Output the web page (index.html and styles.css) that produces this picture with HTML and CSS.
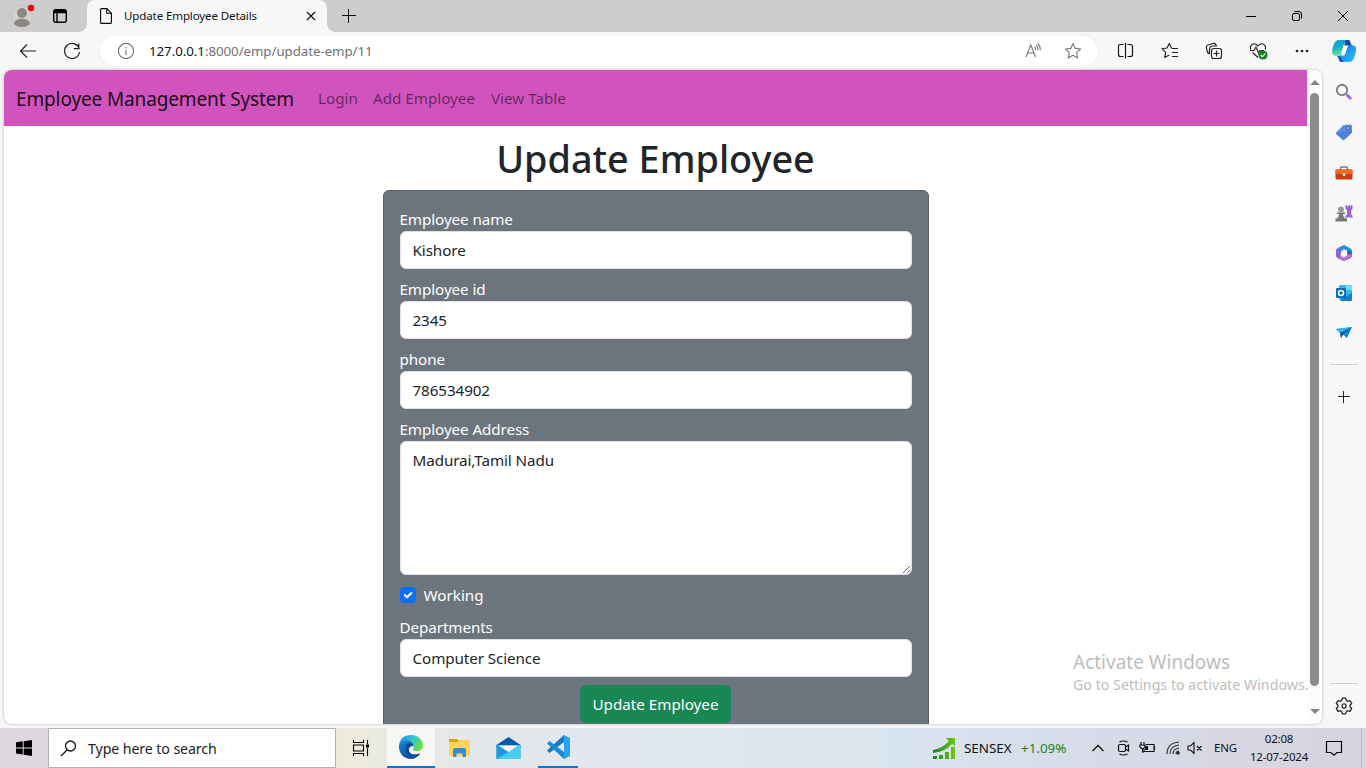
FILE: index.html
```html
<!DOCTYPE html>
<html lang="en">
<head>
<meta charset="utf-8">
<title>Update Employee Details</title>
<link rel="stylesheet" href="styles.css">
</head>
<body>
<header class="tabstrip">
  <svg class="profile" width="24" height="24" viewBox="0 0 24 24"><circle cx="11" cy="12" r="10.5" fill="#d3d1ce" stroke="#c5c2bd"/><circle cx="11" cy="9" r="5" fill="#8b8782"/><path d="M3 20c0-7 16-7 16 0-4 4-12 4-16 0z" fill="#8b8782"/><circle cx="20" cy="4" r="3.2" fill="#e60012"/></svg>
  <svg class="tabmenu" width="16" height="16" viewBox="0 0 16 16" fill="none" stroke="#000" stroke-width="1.4"><rect x="1.7" y="1.7" width="12.6" height="12.6" rx="2.3"/><path d="M2 3.500h12" stroke-width="3.500"/><path d="M5 5v9"/></svg>
  <div class="tab">
    <svg width="14" height="18" viewBox="0 0 14 18" fill="none" stroke="#000" stroke-width="1.1"><path d="M1.6 2.6q0-1 1-1h5.2l4.6 4.6v9.2q0 1-1 1H2.600q-1 0-1-1zM7.800 1.800v4.400h4.400"/></svg>
    <span class="tab-title">Update Employee Details</span>
    <svg width="10" height="10" viewBox="0 0 10 10" stroke="#111" stroke-width="1.2"><path d="M1 1l8 8M9 1L1 9"/></svg>
  </div>
  <svg class="newtab" width="14" height="14" viewBox="0 0 14 14" stroke="#111"><path d="M0 6.500h14M6.500 0v14"/></svg>
  <div class="winctl">
    <svg width="12" height="12" viewBox="0 0 12 12" stroke="#000"><path d="M1 6.500h10"/></svg>
    <svg width="12" height="12" viewBox="0 0 12 12" fill="none" stroke="#000"><rect x="1.500" y="3.500" width="7" height="7" rx="1.500"/><path d="M3.500 1.500h4.500q2.500 0 2.500 2.500v4.500"/></svg>
    <svg width="12" height="12" viewBox="0 0 12 12" stroke="#000"><path d="M1 1l10 10M11 1L1 11"/></svg>
  </div>
</header>

<div class="toolbar">
  <svg class="back" width="18" height="16" viewBox="0 0 18 16" fill="none" stroke="#222" stroke-width="1.150"><path d="M8 1.500L1.500 8 8 14.500M1.500 8H17"/></svg>
  <svg class="reload" width="18" height="18" viewBox="0 0 18 18" fill="none" stroke="#222" stroke-width="1.200"><path d="M16.300 7A7.500 7.500 0 1 0 16.500 10M15.800 1.500v5.200h-5"/></svg>
  <div class="address">
    <svg width="18" height="18" viewBox="0 0 18 18" fill="none" stroke="#707070" stroke-width="1.100"><circle cx="9" cy="9" r="7.600"/><path d="M9 8v5"/><path d="M9 5v1.400"/></svg>
    <span class="url"><b>127.0.0.1</b>:8000/emp/update-emp/11</span>
    <svg class="read" width="16" height="16" viewBox="0 0 16 16" fill="none" stroke="#777" stroke-width="1.100"><path d="M1 14L5.800 2 10.600 14M2.700 10h6.200M9.500 4q1.300 1 1 3M11 2q2.300 1.800 1.800 5M12.500.5q3.300 2.300 2.600 7"/></svg>
    <svg width="18" height="18" viewBox="0 0 18 18" fill="none" stroke="#777" stroke-width="1.100" stroke-linejoin="round"><path d="M9 1.500l2.200 4.900 5.400.600-4 3.600 1.100 5.300L9 13.200l-4.700 2.700 1.100-5.300-4-3.600 5.400-.600z"/></svg>
  </div>
  <div class="tools">
    <svg width="18" height="18" viewBox="0 0 18 18" fill="none" stroke="#111" stroke-width="1.150"><path d="M6.500 2.500H3.500Q1.500 2.500 1.500 4.500v8q0 2 2 2h3M10.500 2.500h3q2 0 2 2v8q0 2-2 2h-3M8.500 1v15.500"/></svg>
    <svg width="18" height="18" viewBox="0 0 18 18" fill="none" stroke="#222" stroke-width="1.150" stroke-linejoin="round"><path d="M10.500 6L8.300 1.500 6 6l-5 .700 3.600 3.600-.900 5.200 4.600-2.500M10.500 6.500h6.500M11 10.500h6M11 14.500h6"/></svg>
    <svg width="18" height="18" viewBox="0 0 18 18" fill="none" stroke="#222" stroke-width="1.150"><rect x="6.500" y="6.500" width="10" height="10" rx="2.300"/><path d="M11.500 8.500v6M8.500 11.500h6M4.500 12Q2.800 11.500 2.300 9.500L1.300 5.500Q1 3.600 2.800 3L8 1.500q2-.500 2.800 1L11.500 4M4.500 12V7q0-3 3-3h4.500"/></svg>
    <svg width="20" height="18" viewBox="0 0 20 18" fill="none" stroke="#222" stroke-width="1.150"><path d="M1.800 7.500Q.5 4 3.500 2.200 6.700.8 9 4q2.500-3.200 5.500-1.800 3 1.800 1.700 5.300M1 8.500h4l2-3.500 2.500 6 1.500-2.500h4M3.500 10.500L9 15.500"/><circle cx="14" cy="13" r="4.600" fill="#128412" stroke="none"/><path d="M11.800 13l1.600 1.600 2.800-3" stroke="#fff"/></svg>
    <svg width="14" height="4" viewBox="0 0 14 4" fill="#222"><circle cx="2" cy="2" r="1.350"/><circle cx="7" cy="2" r="1.350"/><circle cx="12" cy="2" r="1.350"/></svg>
  </div>
  <svg class="copilot" width="24" height="24" viewBox="0 0 24 24"><defs><linearGradient id="cpa" x2=".2" y2="1"><stop stop-color="#139fe0"/><stop offset=".5" stop-color="#12afc5"/><stop offset="1" stop-color="#6ce68f"/></linearGradient><linearGradient id="cpb" x2=".8" y2="1"><stop stop-color="#174fad"/><stop offset=".5" stop-color="#218cf0"/><stop offset="1" stop-color="#25bcff"/></linearGradient></defs><path d="M12 1h4c3 0 2 5 5 5.500 4 .5 3.500 4 2 9.500-1.500 5-3 7-6 7H10c-3 0-2-5-4-6l8-4z" fill="url(#cpb)"/><path d="M7 17c2 0 3 6 5 6H9c-2 0-2-4-4-6z" fill="#184bd0"/><path d="M7 1h7c-2 2-3 8-5 14-.7 2-2 2-4 2-5 0-6-3-4-9C2.500 3 4 1 7 1z" fill="url(#cpa)"/><path d="M14 1h2.500C18 1 18 4 19 6.500h-6.500C13 4 13 2 14 1z" fill="#134b8c"/><path d="M13 6.500h3.500c-1.500 1-2.500 8.500-4.500 10H8.500c2.500-1 2.500-9 4.500-10z" fill="#fff"/></svg>
</div>

<div class="middle">
  <div class="frame">
    <main class="page">
      <nav class="navbar">
        <a class="brand">Employee Management System</a>
        <a class="n1">Login</a><a class="n2">Add Employee</a><a class="n3">View Table</a>
      </nav>
      <h1>Update Employee</h1>
      <form class="card">
        <label>Employee name</label>
        <div class="control">Kishore</div>
        <label>Employee id</label>
        <div class="control">2345</div>
        <label>phone</label>
        <div class="control">786534902</div>
        <label>Employee Address</label>
        <div class="control area"><span>Madurai,Tamil Nadu</span><svg width="9" height="9" viewBox="0 0 9 9" stroke="#555" stroke-width=".900"><path d="M1 8l7-7M5 8l3-3"/></svg></div>
        <div class="check"><svg width="16" height="16" viewBox="0 0 16 16"><rect width="16" height="16" rx="4" fill="#0d6efd"/><path d="M4.800 8l2.300 2.300L11.400 6" fill="none" stroke="#fff" stroke-width="2" stroke-linecap="round" stroke-linejoin="round"/></svg><span>Working</span></div>
        <label>Departments</label>
        <div class="control">Computer Science</div>
        <button type="button" class="submit">Update Employee</button>
      </form>
    </main>
    <div class="scrollbar"><i class="up"></i><i class="thumb"></i><i class="down"></i></div>
  </div>
  <aside class="sidebar">
    <svg width="18" height="18" viewBox="0 0 18 18" fill="none"><path d="M11.500 11.500l4.500 4.500" stroke="#a06bd6" stroke-width="2.800"/><circle cx="7" cy="7" r="5.200" stroke="#7d7d7d" stroke-width="1.900"/></svg>
    <svg width="18" height="18" viewBox="0 0 18 18"><path d="M1 9.500L8.500 2l7-.500q1.500 0 1.500 1.500v6.500L9 17q-1 .5-2-.5L1 11z" fill="#5b90e4"/><path d="M1 10l8 7 8-7.500V7z" fill="#426fd0" opacity=".5"/><circle cx="13" cy="5" r="1.500" fill="#fff" stroke="#22407c"/></svg>
    <svg width="18" height="16" viewBox="0 0 18 16"><path d="M5.500 5V3q0-1 1-1h5q1 0 1 1v2" fill="none" stroke="#777" stroke-width="1.400"/><rect x=".5" y="4.500" width="17" height="10" rx="1" fill="#c93f0c"/><path d="M.5 5.500q0-1 1-1h15q1 0 1 1V9H.5z" fill="#ee6a24"/><circle cx="9" cy="9.500" r="1.600" fill="#cfe3ec"/></svg>
    <svg width="18" height="18" viewBox="0 0 18 18"><path d="M10.500 1h1.500v1.500h1.500V1h1.500v1.500h1V1H17.500v4l-1.300 1v4l1.800 3.500H9.500L12 10V6l-1.500-1z" fill="#9668cf"/><circle cx="6" cy="5.500" r="3" fill="#9b9b9b"/><path d="M2 8.500h8v1.500H8q0 3 2.500 4.500h1.500v3H.5v-3H2q2-1.500 2-4.500H2z" fill="#777"/></svg>
    <svg width="18" height="18" viewBox="0 0 18 18"><path d="M2.500 4.300L5 2.800q1-.5 1.500.7L7 6.500 5.800 9v4L8 14.500l-1 2L2.500 14Q1 13 1 11.500v-5Q1 5 2.500 4.300z" fill="#8c63d4"/><path d="M5 3l3-1.600q1-.6 2 0L15.500 4.500Q17 5.300 17 7v2l-5-2.500-3-1.200L6.500 7 3 8z" fill="#2a8fe0"/><path d="M12 6.500l5 1.500v3.500q0 1.500-1.500 2.500L12 16l-2-2 2.500-2z" fill="#3c4fc4"/><path d="M6 12l3 1.500 3-1.800 4.500-2.700q.7 4-1 5L10 16.700q-1 .6-2 0L3 14z" fill="#b673d8"/><path d="M9 6l2.600 1.500v3L9 12l-2.600-1.500v-3z" fill="#f7f7f7"/></svg>
    <svg width="18" height="18" viewBox="0 0 18 18"><rect x="4" y="1" width="13" height="15" rx="1" fill="#31b8ef"/><path d="M11 1h6v5h-6z" fill="#71d9fa"/><path d="M5 16l12-7v7q0 1-1 1H6z" fill="#137bca"/><rect x="1" y="4" width="10" height="10" rx="1.200" fill="#0968bc"/><circle cx="6" cy="9" r="2.500" fill="none" stroke="#fff" stroke-width="1.500"/></svg>
    <svg width="18" height="18" viewBox="0 0 18 18"><path d="M1 5l16-2-5 11-4-3.500L6 14 5 9z" fill="#1488d4"/><path d="M1 5l16-2L5 9z" fill="#3bb2ed"/><path d="M5 9l12-6-9 7.500L6 14z" fill="#075a9b"/></svg>
    <hr>
    <svg class="plus" width="14" height="14" viewBox="0 0 14 14" stroke="#222"><path d="M1 6.500h12M6.500 1v12"/></svg>
    <span class="spacer"></span>
    <hr>
    <svg class="gear" width="18" height="18" viewBox="0 0 18 18" fill="none" stroke="#222" stroke-width="1.250" stroke-linejoin="round"><path d="M7.300 1.200h3.400l.6 2.300 1.400.8 2.300-.700 1.700 2.900L15 8.200v1.600l1.700 1.700-1.700 2.900-2.300-.7-1.400.8-.6 2.300H7.300l-.6-2.300-1.400-.8-2.300.7-1.700-2.900L3 9.800V8.200L1.300 6.500 3 3.600l2.300.7 1.400-.8z"/><circle cx="9" cy="9" r="2.100"/></svg>
  </aside>
  <div class="activate"><div class="act1">Activate Windows</div><div class="act2">Go to Settings to activate Windows.</div></div>
</div>

<footer class="taskbar">
  <div class="start"><svg width="16" height="16" viewBox="0 0 16 16"><path d="M0 2.300l6.800-1v6.200H0zM7.700 1.200L16 0v7.500H7.700zM0 8.400h6.800v6.200l-6.800-1zM7.700 8.400H16V16l-8.300-1.200z"/></svg></div>
  <div class="search"><svg width="17" height="17" viewBox="0 0 17 17" fill="none" stroke="#111" stroke-width="1.300"><circle cx="10.500" cy="6" r="5"/><path d="M7 10L1 16"/></svg><span>Type here to search</span></div>
  <div class="app view"><svg width="18" height="16" viewBox="0 0 18 16" fill="none" stroke="#000" stroke-width="1.100"><path d="M1.500 0v2.500h10V0M1.500 16v-2.500h10V16M1.500 5h10v6h-10zM15.500 0v4M15.500 8v8"/><path d="M14 4.500h3v3h-3z" fill="#000" stroke="none"/></svg></div>
  <div class="app edge"><svg width="26" height="26" viewBox="0 0 26 26"><defs><linearGradient id="eg" x2="1" y2=".3"><stop stop-color="#1389db"/><stop offset=".55" stop-color="#31bfd6"/><stop offset="1" stop-color="#68e04a"/></linearGradient><linearGradient id="eb" x2=".4" y2="1"><stop stop-color="#1687d2"/><stop offset="1" stop-color="#0b4da1"/></linearGradient></defs><path d="M1 13C1 5 6 1 13 1c7 0 12 5 12 10 0 4-3 6.500-6.500 6.500-3 0-4.500-1-3.500-2.500 2-3-.5-6-4-6-4 0-8 1-10 4z" fill="url(#eg)"/><path d="M1 13c0-4 4-6.500 8-6.500 4 0 7 3 6.500 6-2.500-1-4.500.5-4.500 3.500 0 4 5 6 11 3.500-2 3.500-5.500 5.500-9 5.500C6 25 1 19.500 1 13z" fill="url(#eb)"/><path d="M9 10c-4 5 0 13 7 13 3 0 5-1.500 6-3.500-6 2.500-11 .5-11-3.500 0-3 2-4.500 4-3.500-.5-3-4-4-6-2.500z" fill="#104b91"/><path d="M11 16c0-3 2-4.500 4.500-3.500.3 1-.8 2.200-.5 3 .3 1.500 2.500 2 5 1.900-1.500 2.100-9 2.600-9-1.400z" fill="#f7f7f5"/></svg></div>
  <div class="app"><svg width="22" height="20" viewBox="0 0 22 20"><path d="M0 1h8l2 2v3H0z" fill="#e0a100"/><path d="M0 4h9l1.500-2H20q1 0 1 1v14q0 1-1 1H0z" fill="#ffd45a"/><path d="M4 19v-7q0-2 2-2h9q2 0 2 2v7h-3.500v-3.500h-6V19z" fill="#378bd3"/></svg></div>
  <div class="app"><svg width="25" height="24" viewBox="0 0 25 24"><path d="M.5 9L12.500 1l12 8v3H.5z" fill="#0859a7"/><path d="M.5 9h24v14H.5z" fill="#29a9e8"/><path d="M.5 23l24-14v14z" fill="#4ccbf5"/><path d="M.5 9L12.500 16 .5 23z" fill="#2199e0"/><path d="M2.500 9.500h20l-10 6.500z" fill="#fff"/></svg></div>
  <div class="app code"><svg width="24" height="24" viewBox="0 0 24 24"><path d="M18 7L3.500 18 1 15.500 18 0z" fill="#1479c0"/><path d="M1 8.500L3.500 6 18 17v7z" fill="#1a8ad6"/><path d="M18 0l6 3v18l-6 3z" fill="#27a5f2"/></svg></div>
  <span class="spacer"></span>
  <div class="stock"><svg width="24" height="23" viewBox="0 0 24 23"><defs><linearGradient id="sg"><stop stop-color="#16852a"/><stop offset="1" stop-color="#6cc90d"/></linearGradient></defs><path d="M1 13Q11 11 17 4l-3-3h9v8l-3-2Q13 15 1 16zM1 19h4v3H1zM7 18h4v4H7zM13 15h4v7h-4zM19 10h4v12h-4z" fill="url(#sg)"/></svg><span class="sx">SENSEX</span><span class="pct">+1.09%</span></div>
  <svg class="chev" width="14" height="8" viewBox="0 0 14 8" fill="none" stroke="#111" stroke-width="1.300"><path d="M1.500 7L7 1.500 12.500 7"/></svg>
  <svg class="cam" width="14" height="16" viewBox="0 0 14 16" fill="none" stroke="#111" stroke-width="1.200"><rect x="1.500" y="4.500" width="7" height="7" rx="1.500"/><path d="M8.500 7l3-2v6l-3-2M2.500 2q4-2 8 0M2.500 14q4 2 8 0"/></svg>
  <svg class="bat" width="17" height="14" viewBox="0 0 17 14" fill="none" stroke="#111" stroke-width="1.200"><path d="M7 3.500h8v7H5V8M15.500 5.500v3M2 1v3M5 1v3M1 4h5v2L4.500 7.500h-2L1 6zM3.500 7v4H5"/><path d="M6 5h3v4H6z" fill="#111" stroke="none"/></svg>
  <svg class="wifi" width="14" height="14" viewBox="0 0 14 14" fill="none" stroke="#333" stroke-width="1.200"><path d="M1 13Q1 2 13 1M4 13Q4 5 13 4M7 13Q7 8 13 7M10 13q0-3 3-3"/><circle cx="12" cy="12" r="1.200" fill="#111"/></svg>
  <svg class="vol" width="16" height="14" viewBox="0 0 16 14" fill="none" stroke="#111" stroke-width="1.100"><path d="M1 5h2.500L7 1.500v11L3.500 9H1zM10 5l4.500 4.500M14.500 5L10 9.500"/></svg>
  <span class="lang">ENG</span>
  <div class="clock"><span>02:08</span><span>12-07-2024</span></div>
  <svg class="note" width="18" height="18" viewBox="0 0 18 18" fill="none" stroke="#000" stroke-width="1.200"><path d="M1.500 2.500h15v11H12L9 16.200 6 13.500H1.500z"/></svg>
  <i class="peek"></i>
</footer>
</body>
</html>
```

FILE: styles.css
```css
* { box-sizing: border-box; }
body { margin: 0; width: 1366px; height: 768px; overflow: hidden; display: flex; flex-direction: column; background: #f7f7f7; color: #212529; font-family: "Noto Sans", sans-serif; font-size: 15.2px; }
svg { display: block; flex: none; }
span, a { white-space: nowrap; }
.spacer { flex: 1; }

.tabstrip { height: 32px; background: #cdcdcd; display: flex; align-items: center; flex: none; }
.profile { margin-left: 11px; }
.tabmenu { margin-left: 17px; }
.tab { margin-left: 19px; width: 240px; height: 32px; background: #f7f7f7; border-radius: 8px 8px 0 0; display: flex; align-items: center; padding: 0 11px 0 12px; position: relative; }
.tab::before, .tab::after { content: ""; position: absolute; bottom: 0; width: 8px; height: 8px; }
.tab::before { left: -8px; background: radial-gradient(circle at 0 0, #cdcdcd 7.500px, #f7f7f7 8px); }
.tab::after { right: -8px; background: radial-gradient(circle at 100% 0, #cdcdcd 7.500px, #f7f7f7 8px); }
.tab-title { font-size: 11.500px; color: #111; margin-left: 11px; flex: 1; letter-spacing: -.1px; padding-bottom: 2px; }
.newtab { margin-left: 15px; }
.winctl { margin-left: auto; display: flex; gap: 34px; padding-right: 17px; }

.toolbar { height: 38px; flex: none; display: flex; align-items: center; padding-left: 19px; }
.reload { margin-left: 26px; }
.address { margin-left: 19px; width: 998px; height: 30px; background: #fff; border-radius: 15px; display: flex; align-items: center; padding: 0 16px 0 17px; box-shadow: 0 0 2px #e4e4e4; }
.url { font-size: 13.300px; letter-spacing: -.05px; margin-left: 14px; color: #717171; flex: 1; }
.url b { font-weight: 400; color: #111; }
.read { margin-right: 23px; }
.tools { display: flex; align-items: center; margin-left: 19px; gap: 26px; }
.copilot { margin-left: 23px; }

.middle { flex: none; height: 658px; display: flex; padding-left: 4px; position: relative; }
.frame { width: 1318px; height: 654px; background: #fff; border-radius: 8px; overflow: hidden; display: flex; box-shadow: 0 0 3px #aaa; }
.page { width: 1303px; overflow: hidden; }
.navbar { height: 56px; background: #d153bd; display: flex; align-items: center; padding-left: 12px; color: rgba(0,0,0,.53); }
.navbar .brand { color: rgba(0,0,0,.9); font-size: 19px; width: 302px; letter-spacing: -.13px; padding-top: 1px; }
.n1 { width: 55px; }
.n2 { width: 118px; }
h1 { margin: 8px 0; font-size: 37.800px; line-height: 50px; height: 48px; font-weight: 540; text-align: center; }
.card { width: 546px; height: 600px; margin: 0 auto; background: #6c757d; border: 1px solid #596168; border-radius: 6px; padding: 16px; display: flex; flex-direction: column; color: #fff; letter-spacing: -.08px; }
.card label { height: 24px; line-height: 24px; }
.control { height: 38px; flex: none; background: #fff; border: 1px solid #dee2e6; border-radius: 6px; margin-bottom: 8px; padding: 6px 12px; line-height: 24px; color: #212529; }
.area { height: 134px; position: relative; }
.area svg { position: absolute; right: 0; bottom: 0; }
.check { height: 24px; margin-bottom: 8px; display: flex; align-items: center; gap: 8px; letter-spacing: 0; }
.submit { align-self: center; width: 151px; height: 38px; flex: none; border: 0; padding: 0; border-radius: 6px; background: #198754; color: #fff; font: inherit; }
.scrollbar { width: 15px; background: #fcfcfc; display: flex; flex-direction: column; align-items: center; padding: 10px 0; }
.up { border: 5px solid transparent; border-top: 0; border-bottom: 5px solid #858585; }
.thumb { width: 9px; height: 593px; border-radius: 5px; background: #8b8b8b; margin-top: 8px; }
.down { border: 5px solid transparent; border-bottom: 0; border-top: 5px solid #858585; margin-top: auto; }
.sidebar { width: 44px; display: flex; flex-direction: column; align-items: center; padding: 13px 0; }
.sidebar svg { margin-bottom: 22px; }
.sidebar svg:nth-child(3) { margin: 2px 0 23px; }
.sidebar hr { width: 28px; border: 0; border-top: 1px solid #ccc; margin: 0 0 25px; }
.sidebar .plus { margin: 0; }
.sidebar hr:nth-of-type(2) { margin: 0 0 13px; }
.sidebar .gear { margin: 0; }
.activate { position: absolute; left: 1073px; top: 580px; color: #bdbdbd; white-space: nowrap; }
.act1 { font-size: 19px; line-height: 25px; }
.act2 { font-size: 14.230px; line-height: 20px; }

.taskbar { height: 40px; flex: none; display: flex; align-items: center; color: #111; background: linear-gradient(90deg, #ddd6df 0, #e4dddd 180px, #edebdd 350px, #e5e8e8 450px, #e2e7f0 600px, #d9e5ee 900px, #d7dbe8 1100px, #d7d3df 1366px); }
.start { width: 48px; display: flex; justify-content: center; }
.search { width: 288px; height: 40px; background: #fff; border: 1px solid #b0b0b0; display: flex; align-items: center; padding-left: 11px; gap: 11px; font-size: 14.200px; letter-spacing: -.1px; color: #222; }
.app { height: 40px; width: 49px; display: flex; align-items: center; justify-content: center; }
.view { width: 51px; padding-right: 2px; }
.edge { width: 48px; background: #f7f7f5; border-bottom: 2px solid #0078d4; }
.code { width: 40px; margin-left: 5px; border-bottom: 2px solid #0078d4; }
.stock { display: flex; align-items: center; width: 159px; font-size: 13.400px; }
.sx { margin-left: 8px; width: 57px; }
.pct { color: #16851c; }
.cam { margin-left: 12px; }
.bat { margin-left: 8px; }
.wifi { margin-left: 10px; }
.vol { margin-left: 7px; }
.lang { font-size: 11.500px; margin-left: 11px; width: 35px; padding-bottom: 2px; letter-spacing: -.2px; }
.clock { width: 60px; display: flex; flex-direction: column; align-items: center; font-size: 11.500px; line-height: 18px; letter-spacing: -.2px; padding-bottom: 1px; }
.note { margin-left: 16px; margin-right: 22px; }
.peek { width: 1px; height: 40px; background: #b5b3c0; margin-right: 4px; margin-left: -4px; }
```
